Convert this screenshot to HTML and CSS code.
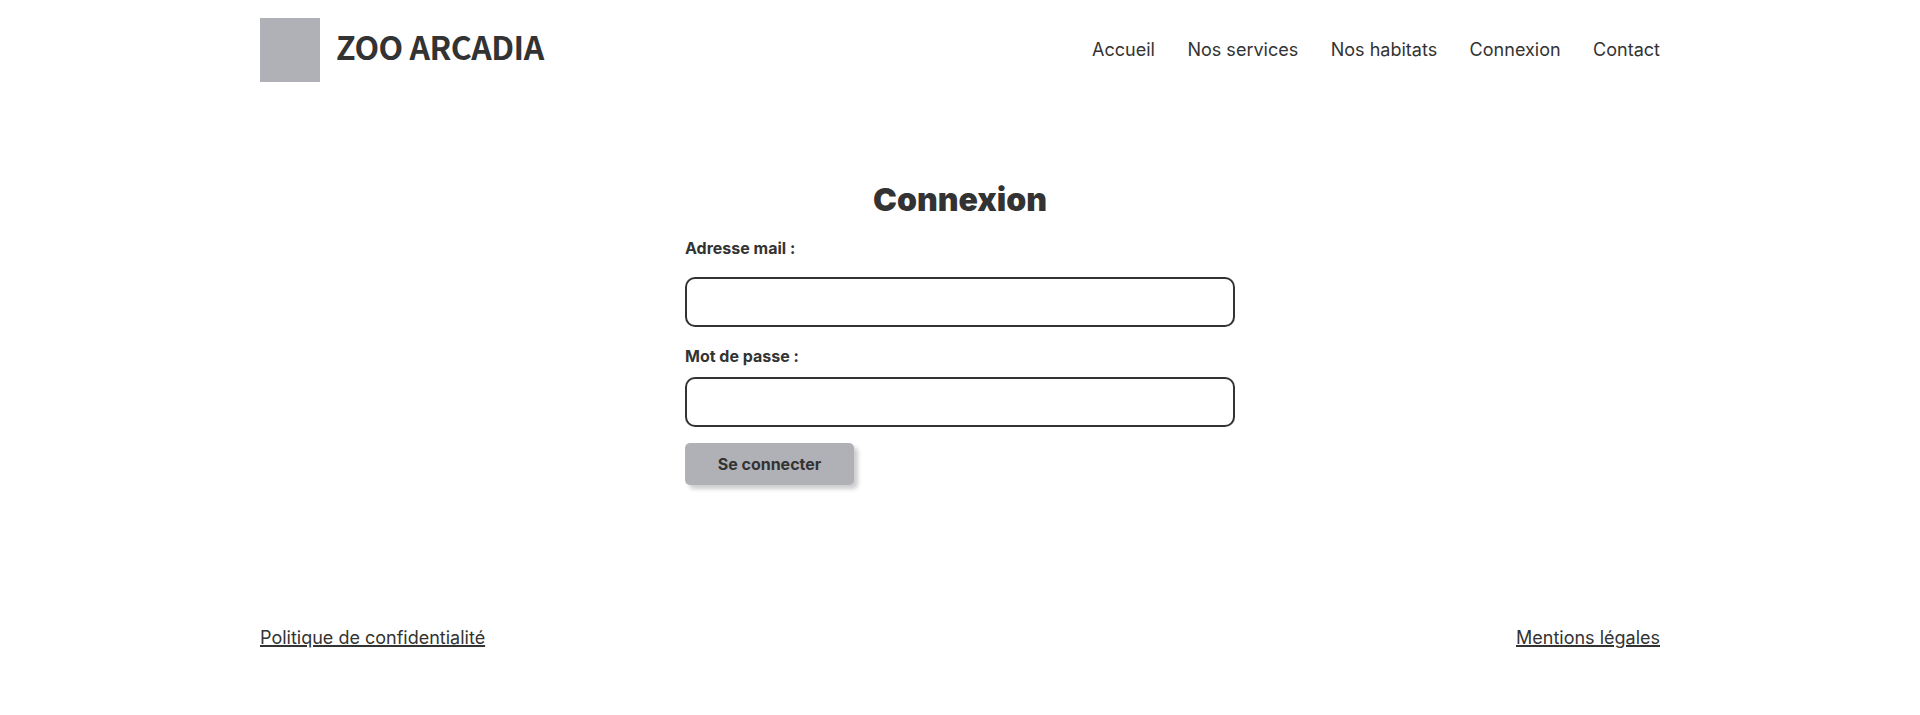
FILE: index.html
```
<!DOCTYPE html>
<html lang="fr">
<head>
<meta charset="utf-8">
<title>Zoo Arcadia - Connexion</title>
<link rel="stylesheet" href="styles.css">
</head>
<body>
<header class="header">
  <div class="brand"><div class="logo"></div><span class="brand-name">ZOO ARCADIA</span></div>
  <nav class="nav">
    <a href="#">Accueil</a>
    <a href="#">Nos services</a>
    <a href="#">Nos habitats</a>
    <a href="#">Connexion</a>
    <a href="#">Contact</a>
  </nav>
</header>
<main class="main">
  <h1 class="title">Connexion</h1>
  <form class="form">
    <label class="label label-mail" for="mail">Adresse mail :</label>
    <input class="input" id="mail" type="email">
    <label class="label label-password" for="password">Mot de passe :</label>
    <input class="input" id="password" type="password">
    <button class="button" type="button">Se connecter</button>
  </form>
</main>
<footer class="footer">
  <a href="#">Politique de confidentialité</a>
  <a href="#">Mentions légales</a>
</footer>
</body>
</html>
```
FILE: styles.css
```
* { box-sizing: border-box; }
body {
  margin: 0 auto;
  width: 1400px;
  height: 715px;
  display: flex;
  flex-direction: column;
  background: #fff;
  color: #333;
  font-family: Inter, sans-serif;
  font-size: 18px;
  line-height: 22px;
}
.header { height: 100px; display: flex; align-items: center; justify-content: space-between; }
.brand { display: flex; align-items: center; gap: 16px; }
.logo { width: 60px; height: 64.8px; background: #b0b1b6; }
.brand-name {
  font-family: "Noto Sans CJK SC", sans-serif;
  font-size: 32px;
  font-weight: 700;
  line-height: 46px;
  letter-spacing: -0.5px;
  padding-bottom: 7px;
}
.nav { display: flex; gap: 32.4px; }
.nav a { color: #333; text-decoration: none; font-weight: 400; letter-spacing: 0.015px; }
.main { flex: 1; padding-top: 80px; }
.title { margin: 0; font-size: 32px; line-height: 39px; font-weight: 900; text-align: center; }
.form { width: 550px; margin: 0 auto; display: flex; flex-direction: column; align-items: flex-start; }
.label { font-size: 16px; line-height: 20px; font-weight: 700; }
.label-mail { margin: 19px 0 19px; }
.label-password { margin: 19px 0 11px; }
.input {
  width: 100%;
  height: 50px;
  border: 2px solid #333;
  border-radius: 10px;
  background: #fff;
}
.button {
  width: 169px;
  height: 42px;
  margin-top: 16px;
  padding: 0;
  border: 0;
  border-radius: 5px;
  background: #b0b1b6;
  color: #333;
  font: 700 16px/20px Inter, sans-serif;
  box-shadow: 4px 4px 4px rgba(0, 0, 0, .2);
}
.footer { height: 88px; display: flex; justify-content: space-between; }
.footer a { color: #333; font-weight: 400; text-decoration-thickness: 2px; }
```
